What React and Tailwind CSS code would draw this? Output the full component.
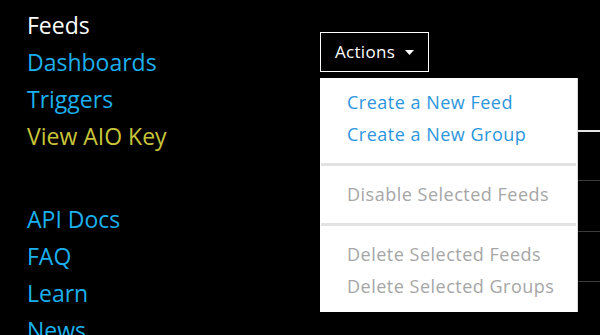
import React from "react";

const mainLinks = [
  { label: "Feeds", color: "text-white" },
  { label: "Dashboards", color: "text-[#1cb0ee]" },
  { label: "Triggers", color: "text-[#1cb0ee]" },
  { label: "View AIO Key", color: "text-[#c9c53a]" },
];

const helpLinks = ["API Docs", "FAQ", "Learn", "News"];

const MenuItem = ({ children, disabled }) => (
  <li
    className={`h-8 leading-8 pl-[27px] whitespace-nowrap text-[18px] tracking-[0.5px] ${
      disabled ? "text-[#a6a6a6]" : "text-[#2b96dc]"
    }`}
  >
    {children}
  </li>
);

const Divider = ({ className }) => (
  <li className={`h-[3px] mx-px bg-[#e2e2e2] ${className}`} />
);

export default function App() {
  return (
    <div className="w-[600px] h-[335px] overflow-hidden bg-black flex font-['Open_Sans',sans-serif]">
      {/* LEFT: sidebar nav */}
      <div className="w-[320px] shrink-0 pl-[27px] pt-[7px]">
        <ul className="text-[23px] leading-[37px]">
          {mainLinks.map((link) => (
            <li key={link.label} className={link.color}>
              {link.label}
            </li>
          ))}
        </ul>
        <ul className="mt-[46px] text-[23px] leading-[37px] text-[#1cb0ee]">
          {helpLinks.map((label) => (
            <li key={label}>{label}</li>
          ))}
        </ul>
      </div>

      {/* RIGHT: page header + actions */}
      <div className="flex-1 relative">
        <h1 className="-mt-[24px] h-[28px] pl-[3px] text-[26px] leading-[28px] whitespace-nowrap">
          <span className="text-[#1a8fd8]">adafruit</span>
          <span className="text-white"> / </span>
          <span className="text-[#cfcfcf]">Feeds</span>
        </h1>

        <button className="mt-[28px] h-[40px] w-[109px] border border-white flex items-center pl-[14px] gap-[10px] text-white text-[17px] tracking-[0.3px]">
          Actions
          <svg width="9" height="5" viewBox="0 0 9 5">
            <path d="M0 0h9L4.5 5z" fill="white" />
          </svg>
        </button>

        {/* table rows behind the menu */}
        <div className="mt-[58px]">
          <div className="h-[2px] bg-[#e5e5e5]" />
          <div className="h-[49px] border-b border-[#3a3a3a]" />
          <div className="h-[51px] border-b border-[#3a3a3a]" />
          <div className="h-[50px] border-b border-[#3a3a3a]" />
        </div>

        {/* dropdown menu */}
        <ul className="absolute left-0 top-[78px] w-[258px] h-[234px] bg-white border-r border-[#d8d8d8] pt-2">
          <MenuItem>Create a New Feed</MenuItem>
          <MenuItem>Create a New Group</MenuItem>
          <Divider className="mt-[13px] mb-3" />
          <MenuItem disabled>Disable Selected Feeds</MenuItem>
          <Divider className="mt-[13px] mb-3" />
          <MenuItem disabled>Delete Selected Feeds</MenuItem>
          <MenuItem disabled>Delete Selected Groups</MenuItem>
        </ul>
      </div>
    </div>
  );
}
